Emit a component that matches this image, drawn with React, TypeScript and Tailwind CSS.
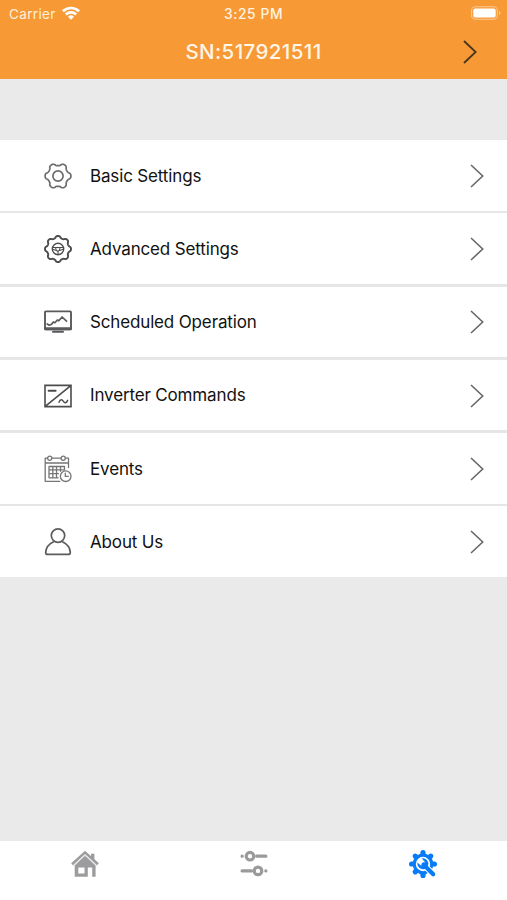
import type { ReactNode } from 'react';

const gearPath = (teeth: number, radius: number, depth: number) => {
  const points: string[] = [];
  for (let i = 0; i < 144; i++) {
    const a = (i / 144) * Math.PI * 2;
    const r = radius + depth * Math.tanh(1.6 * Math.cos(teeth * a));
    points.push(`${(14 + r * Math.cos(a)).toFixed(2)} ${(14 + r * Math.sin(a)).toFixed(2)}`);
  }
  return `M${points.join('L')}Z`;
};

function Icon({ children, color = '#4c4c4e' }: { children: ReactNode; color?: string }) {
  return (
    <svg
      viewBox="0 0 28 28"
      className="w-7 h-7 shrink-0"
      fill="none"
      stroke={color}
      strokeWidth="1.7"
      strokeLinecap="round"
      strokeLinejoin="round"
    >
      {children}
    </svg>
  );
}

const items = [
  {
    label: 'Basic Settings',
    icon: (
      <Icon color="#6c6c6e">
        <path d={gearPath(6, 11.6, 1.4)} />
        <circle cx="14" cy="14" r="5.1" />
      </Icon>
    ),
  },
  {
    label: 'Advanced Settings',
    icon: (
      <Icon>
        <path d={gearPath(8, 12, 1.1)} strokeWidth="1.9" />
        <circle cx="14" cy="14" r="5.7" strokeWidth="1.4" />
        <path d="M9.2 12.5h9.6M9.4 14.4l3.2 1M18.6 14.4l-3.2 1M14 16v3.2" strokeWidth="1.1" />
        <path d="M11.8 12.6h4.4L15 16h-2z" strokeWidth="1" />
      </Icon>
    ),
  },
  {
    label: 'Scheduled Operation',
    icon: (
      <Icon color="#5a5a5c">
        <rect x="1" y="3.4" width="26" height="18" rx=".8" strokeWidth="1.9" />
        <path d="M1.4 20.8h25.2" strokeWidth="3" />
        <path d="M9 23.8h10" strokeWidth="2" />
        <path d="M3.2 16l2 1.2 2.4-.9 1.7-2.4 1.6.8 2.4-2.7 1.5.8 3.3-3.8 4.4 4.2" strokeWidth="1.7" />
      </Icon>
    ),
  },
  {
    label: 'Inverter Commands',
    icon: (
      <Icon>
        <path d="M1 3.4h26v21.2H1zM1.5 24.1L26.5 3.9" strokeLinejoin="miter" strokeWidth="1.6" />
        <path d="M4.6 8.7h7" strokeWidth="2" />
        <path d="M15 20.3c1.5-3.4 3-3 4.4-.9s2.9 2 4.2-1" strokeWidth="1.5" />
      </Icon>
    ),
  },
  {
    label: 'Events',
    icon: (
      <Icon color="#757577">
        <g strokeWidth="1.3">
          <path d="M3.5 3.2H1.2v23.1h14.6M8 3.2h9M21.5 3.2h3v9.3M1.2 8h23.3" />
          <circle cx="5.7" cy="3.2" r="2.1" />
          <circle cx="19.2" cy="3.2" r="2.1" />
          <path d="M5 11.5h15.5v3.3H5zM5 14.8v8h7.5v-11.3M5 18.6h9.5M8.8 11.5v11.3M16.5 11.5v4.8M12.5 22.8h1.7" />
          <circle cx="21.7" cy="21.2" r="5.3" />
          <path d="M21.3 18.2v3.2h3" />
        </g>
      </Icon>
    ),
  },
  {
    label: 'About Us',
    icon: (
      <Icon color="#5c5c5e">
        <circle cx="14" cy="7.6" r="6.7" />
        <path d="M9.2 14C5 16 2 19.2 1.7 24.4q0 2 2 2h20.6q2 0 2-2C26 19.2 23 16 18.8 14" />
      </Icon>
    ),
  },
];

function StatusBar() {
  return (
    <div className="relative flex h-7 items-center justify-between pl-[9px] pr-[6px] text-[13.5px]">
      <div className="flex items-center gap-[6px] text-[#fff0dc]">
        <span className="tracking-[0.35px]">Carrier</span>
        <svg viewBox="0 0 18 14" className="w-[18px] h-[14px] -mt-[2px]" fill="none" stroke="#fff" strokeWidth="2.6">
          <path d="M.9 5.2a11.7 11.7 0 0 1 16.2 0M3.8 8.5a7.5 7.5 0 0 1 10.4 0" />
          <path d="M9 13.8L6 10.8a4.3 4.3 0 0 1 6 0z" fill="#fff" stroke="none" />
        </svg>
      </div>
      <span className="absolute left-1/2 -translate-x-1/2 whitespace-nowrap font-medium text-[#fff3e3] text-[13.8px] tracking-[0.6px]">
        3:25 PM
      </span>
      <svg viewBox="0 0 30 14" className="w-[30px] h-[14px] -mt-[2px]">
        <rect x=".6" y=".7" width="25.8" height="12.6" rx="3.8" fill="none" stroke="#fbc896" strokeWidth="1.1" />
        <rect x="2.3" y="2.4" width="22.4" height="9.2" rx="2.2" fill="#fff" />
        <path d="M28 5v4q1.5-.5 1.5-2T28 5z" fill="#fbc896" />
      </svg>
    </div>
  );
}

function Chevron({ dark }: { dark?: boolean }) {
  return (
    <svg
      viewBox="0 0 14 24"
      className="w-[14px] h-6"
      fill="none"
      stroke={dark ? '#4a3820' : '#68686a'}
      strokeWidth={dark ? 1.9 : 1.6}
    >
      <path d="M1 1l11.7 11L1 23" />
    </svg>
  );
}

function TabBar() {
  return (
    <nav className="grid h-[59px] grid-cols-3 justify-items-center bg-white pt-[9px]">
      <svg viewBox="0 0 28 28" className="w-7 h-7" fill="#9c9c9e">
        <path d="M14 5.8l10.6 9.7v11.3H3.7V15.5z" />
        <path d="M1 14.2L14 2.4l13 11.8" fill="none" stroke="#9c9c9e" strokeWidth="2.6" />
        <path d="M20 3.8h3.4v7L20 8z" />
        <path d="M1.9 16.2L14 5.3l12.1 10.9" fill="none" stroke="#d6d6d8" strokeWidth=".8" />
        <path d="M7.3 17.6h6.2v5.8H7.3zM16.8 17.6h4.4v9.4h-4.4z" fill="#fff" />
      </svg>
      <svg
        viewBox="0 0 28 28"
        className="w-7 h-7"
        fill="none"
        stroke="#9a9a9c"
        strokeWidth="3.2"
        strokeLinecap="round"
      >
        <path d="M2.1 6.2h.1M16.7 6.2h9.2M2.1 20.9h9.4M25.8 20.9h.1" />
        <circle cx="10" cy="6.2" r="3.8" />
        <circle cx="18" cy="20.9" r="3.8" />
      </svg>
      <svg viewBox="0 0 28 28" className="w-7 h-7">
        <g stroke="#087bf7" strokeWidth="5.2" strokeLinecap="round">
          <path d="M14 2.6v22.8M2.6 14h22.8M6.2 6.2l15.6 15.6M21.8 6.2L6.2 21.8" />
        </g>
        <circle cx="14" cy="14" r="10.4" fill="#087bf7" />
        <circle cx="14" cy="14" r="7.2" fill="#fff" />
        <path d="M15 15l9.6 9.6" stroke="#fff" strokeWidth="6.2" strokeLinecap="round" />
        <path d="M14.5 14.5l9.7 9.7" stroke="#087bf7" strokeWidth="4.2" strokeLinecap="round" />
        <path
          d="M12.6 8.3a5.6 5.6 0 0 1 6.4 7.3l-3.3 3.3a5.7 5.7 0 0 1-7.3-6.4l3.4 3.1 3.1-.8.8-3.1z"
          fill="#087bf7"
        />
      </svg>
    </nav>
  );
}

export default function App() {
  return (
    <div className="flex h-[900px] w-full flex-col bg-[#eaeaea] font-['Inter',sans-serif]">
      <header className="h-[79px] shrink-0 bg-[#f79a35]">
        <StatusBar />
        <div className="relative flex h-[49px] items-center justify-center text-[20.5px] font-medium text-[#fff6e8]">
          <h1 className="tracking-[0.4px]">SN:517921511</h1>
          <div className="absolute right-[30.5px] -mt-px">
            <Chevron dark />
          </div>
        </div>
      </header>
      <main className="mt-[61px] flex flex-1 flex-col gap-[2.7px]">
        {items.map((item) => (
          <button
            key={item.label}
            className="flex h-[70.6px] w-full shrink-0 items-center bg-white pl-[43.5px] pr-[23px] pt-px text-left shadow-[0_2.7px_0_#e6e6e8] last:shadow-none"
          >
            {item.icon}
            <span className="ml-[18.5px] flex-1 pt-px text-[17px] tracking-[-0.15px] text-[#111]">{item.label}</span>
            <Chevron />
          </button>
        ))}
      </main>
      <TabBar />
    </div>
  );
}
